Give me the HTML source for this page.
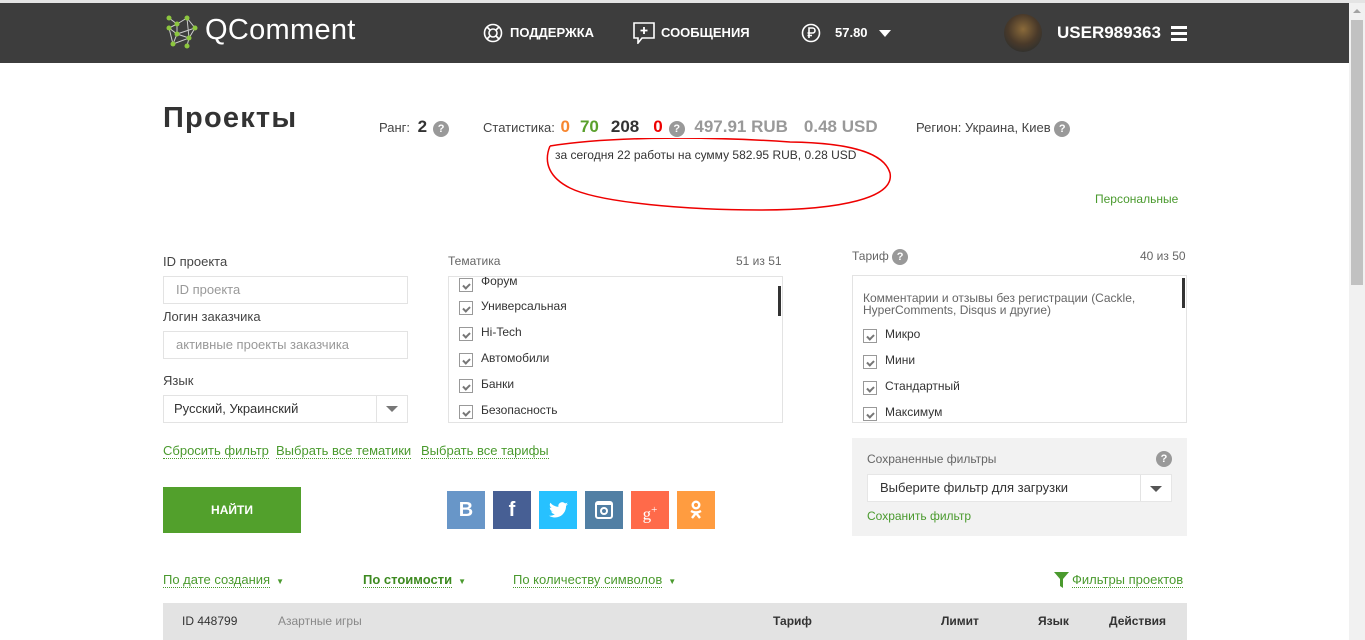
<!DOCTYPE html>
<html><head><meta charset="utf-8"><style>
*{margin:0;padding:0;box-sizing:border-box}
body{width:1365px;height:640px;overflow:hidden;background:#fff;font-family:"Liberation Sans",Arial,sans-serif;position:relative;color:#333}
.a{position:absolute;white-space:nowrap}
.hd{position:absolute;left:0;top:3px;width:1349px;height:60px;background:#3d3d3d}
.nav{color:#fff;font-weight:bold;font-size:13px}
.lbl{font-size:13px;color:#444}
.inp{position:absolute;border:1px solid #e3e3e3;background:#fff;font-size:13px;color:#999;padding-left:12px;line-height:25px}
.cb{position:absolute;width:14px;height:14px;border:1px solid #999;background:#fff}
.cb:after{content:"";position:absolute;left:3px;width:5px;height:3px;border-left:2px solid #777;border-bottom:2px solid #777;transform:rotate(-45deg);top:4px}
.it{position:absolute;font-size:12px;color:#333}
.lnk{color:#4a9a2e;font-size:13px;border-bottom:1px dotted #4a9a2e}
.q{display:inline-block;width:16px;height:16px;border-radius:50%;background:#999;color:#fff;font-size:11px;font-weight:bold;text-align:center;line-height:16px;vertical-align:middle}
.soc{position:absolute;top:491px;width:38px;height:38px;color:#fff;font-weight:bold;text-align:center;line-height:38px;font-size:20px}
</style></head><body>
<div class="a" style="left:0;top:0;width:1365px;height:3px;background:#e4e4e4"></div>
<div class="hd"></div>
<div class="a" style="left:1349px;top:3px;width:16px;height:637px;background:#f1f1f1"></div>
<div class="a" style="left:1351px;top:20px;width:12px;height:265px;background:#c1c1c1"></div>
<div class="a" style="left:1353px;top:9px;width:0;height:0;border-left:4px solid transparent;border-right:4px solid transparent;border-bottom:4px solid #a3a3a3"></div>
<svg class="a" style="left:163px;top:14px" width="36" height="36" viewBox="0 0 36 36"><g stroke="#ccc" stroke-width="1" fill="none"><path d="M6 4L14 10L24 4L32 14L26 24L14 20L6 14L14 10M14 10L14 20L10 30L26 24L24 32M6 14L10 30M24 4L26 24M32 14L14 20"/></g><g fill="#8dc63f"><circle cx="6" cy="4" r="2.5"/><circle cx="24" cy="4" r="2.5"/><circle cx="14" cy="10" r="2.5"/><circle cx="32" cy="14" r="2.5"/><circle cx="6" cy="14" r="2.5"/><circle cx="14" cy="20" r="2.5"/><circle cx="26" cy="24" r="2.5"/><circle cx="10" cy="30" r="2.5"/><circle cx="24" cy="32" r="2.5"/></g></svg>
<div class="a" style="left:205px;top:14px;color:#fff;font-size:29px;letter-spacing:0.3px">QComment</div>
<svg class="a" style="left:483px;top:23px" width="20" height="20" viewBox="0 0 20 20"><circle cx="10" cy="10" r="8.5" fill="none" stroke="#fff" stroke-width="1.6"/><circle cx="10" cy="10" r="4" fill="none" stroke="#fff" stroke-width="1.6"/><path d="M4 4L7 7M16 4L13 7M4 16L7 13M16 16L13 13" stroke="#fff" stroke-width="1.6"/></svg>
<div class="a nav" style="left:510px;top:25px">ПОДДЕРЖКА</div>
<svg class="a" style="left:633px;top:22px" width="22" height="22" viewBox="0 0 22 22"><path d="M1 1H21V16H9L5 21V16H1Z" fill="none" stroke="#fff" stroke-width="1.6"/><path d="M11 5V12M7.5 8.5H14.5" stroke="#fff" stroke-width="1.8"/></svg>
<div class="a nav" style="left:661px;top:25px">СООБЩЕНИЯ</div>
<svg class="a" style="left:801px;top:23px" width="20" height="20" viewBox="0 0 20 20"><circle cx="10" cy="10" r="8.5" fill="none" stroke="#fff" stroke-width="1.6"/><path d="M8 15V5H11.5A2.5 2.5 0 0 1 11.5 10H6.5M6.5 12.5H11" fill="none" stroke="#fff" stroke-width="1.6"/></svg>
<div class="a nav" style="left:835px;top:25px">57.80</div>
<div class="a" style="left:879px;top:30px;border-left:6px solid transparent;border-right:6px solid transparent;border-top:7px solid #fff"></div>
<div class="a" style="left:1004px;top:14px;width:38px;height:38px;border-radius:50%;background:radial-gradient(circle at 50% 40%,#8a6a3a,#4a3a2a 50%,#1e2a30)"></div>
<div class="a" style="left:1057px;top:23px;color:#fff;font-weight:bold;font-size:17px">USER989363</div>
<div class="a" style="left:1171px;top:26px;width:16px;height:3px;background:#fff;box-shadow:0 6px 0 #fff,0 12px 0 #fff"></div>
<div class="a" style="left:163px;top:102px;font-size:29px;font-weight:bold;color:#333;letter-spacing:1.2px">Проекты</div>
<div class="a" style="left:379px;top:117px;font-size:13px;color:#444">Ранг: <b style="font-size:17px;color:#333;margin:0 6px 0 4px">2</b><span class="q">?</span></div>
<div class="a" style="left:483px;top:117px;font-size:13px;color:#444">Статистика: <b style="font-size:17px;color:#f7862f;margin:0 10px 0 2px">0</b><b style="font-size:17px;color:#5aa02c;margin-right:12px">70</b><b style="font-size:17px;color:#333;margin-right:14px">208</b><b style="font-size:17px;color:#e00;margin-right:6px">0</b><span class="q">?</span> <b style="font-size:17px;color:#999;margin:0 16px 0 6px">497.91 RUB</b><b style="font-size:17px;color:#999">0.48 USD</b></div>
<div class="a" style="left:916px;top:120px;font-size:13px;color:#444">Регион: Украина, Киев <span class="q">?</span></div>
<div class="a" style="left:555px;top:148px;font-size:12px;color:#333">за сегодня 22 работы на сумму 582.95 RUB, 0.28 USD</div>
<svg class="a" style="left:540px;top:138px" width="355" height="80" viewBox="0 0 355 80"><path d="M10 8C60 0 150 -3 250 4C320 5 345 18 350 35C355 60 300 72 220 72C150 72 60 65 30 50C10 40 3 25 10 8" fill="none" stroke="#e00" stroke-width="1.5"/></svg>
<div class="a" style="left:1095px;top:192px;font-size:12px;color:#4a9a2e">Персональные</div>
<div class="a lbl" style="left:163px;top:254px">ID проекта</div>
<div class="inp" style="left:163px;top:276px;width:245px;height:28px">ID проекта</div>
<div class="a lbl" style="left:163px;top:309px">Логин заказчика</div>
<div class="inp" style="left:163px;top:331px;width:245px;height:28px">активные проекты заказчика</div>
<div class="a lbl" style="left:163px;top:373px">Язык</div>
<div class="inp" style="left:163px;top:395px;width:245px;height:28px;color:#333;padding-left:10px">Русский, Украинский</div>
<div class="a" style="left:376px;top:396px;width:1px;height:26px;background:#e3e3e3"></div>
<div class="a" style="left:386px;top:406px;border-left:6px solid transparent;border-right:6px solid transparent;border-top:6px solid #777"></div>
<div class="a" style="left:163px;top:442px"><span class="lnk">Сбросить фильтр</span></div>
<div class="a" style="left:276px;top:442px"><span class="lnk">Выбрать все тематики</span></div>
<div class="a" style="left:421px;top:442px"><span class="lnk">Выбрать все тарифы</span></div>
<div class="a" style="left:163px;top:487px;width:138px;height:46px;background:#52a02c;color:#fff;font-weight:bold;font-size:12px;text-align:center;line-height:46px">НАЙТИ</div>
<div class="a" style="left:448px;top:254px;font-size:12px;color:#666">Тематика</div>
<div class="a" style="left:736px;top:254px;font-size:12px;color:#666">51 из 51</div>
<div class="a" style="left:448px;top:276px;width:335px;height:147px;border:1px solid #e3e3e3;overflow:hidden">
<div class="a" style="left:329px;top:9px;width:3px;height:30px;background:#333"></div>
<div class="cb" style="left:10px;top:1px"></div><div class="it" style="left:32px;top:-3px">Форум</div>
<div class="cb" style="left:10px;top:24px"></div><div class="it" style="left:32px;top:22px">Универсальная</div>
<div class="cb" style="left:10px;top:50px"></div><div class="it" style="left:32px;top:48px">Hi-Tech</div>
<div class="cb" style="left:10px;top:76px"></div><div class="it" style="left:32px;top:74px">Автомобили</div>
<div class="cb" style="left:10px;top:102px"></div><div class="it" style="left:32px;top:100px">Банки</div>
<div class="cb" style="left:10px;top:128px"></div><div class="it" style="left:32px;top:126px">Безопасность</div>
</div>
<div class="soc" style="left:447px;background:#6896c8">B</div>
<div class="soc" style="left:493px;background:#475f94">f</div>
<div class="soc" style="left:539px;background:#27c1ff"><svg style="position:absolute;left:10px;top:11px" width="19" height="16" viewBox="0 0 24 20"><path d="M24 2.4c-.9.4-1.8.7-2.8.8 1-.6 1.8-1.6 2.2-2.7-1 .6-2 1-3.1 1.2A4.9 4.9 0 0 0 11.9 6 14 14 0 0 1 1.7.9a4.9 4.9 0 0 0 1.5 6.6c-.8 0-1.6-.2-2.2-.6 0 2.4 1.7 4.4 3.9 4.8-.7.2-1.5.2-2.2.1.6 2 2.4 3.4 4.6 3.4A9.9 9.9 0 0 1 0 17.2 14 14 0 0 0 7.5 19.4c9.1 0 14-7.5 14-14v-.6c1-.7 1.8-1.6 2.5-2.4z" fill="#fff"/></svg></div>
<div class="soc" style="left:585px;background:#517fa4"><div style="position:absolute;left:10px;top:10px;width:18px;height:18px;border:2px solid #fff;border-radius:3px;border-top-width:4px"></div><div style="position:absolute;left:15px;top:16px;width:8px;height:8px;border:2px solid #fff;border-radius:50%"></div></div>
<div class="soc" style="left:631px;background:#ff6a4a;font-weight:normal;font-family:'Liberation Serif',serif;font-size:17px">g<sup style="font-size:11px">+</sup></div>
<div class="soc" style="left:677px;background:#ff9c40"><svg style="position:absolute;left:12px;top:9px" width="14" height="20" viewBox="0 0 14 20"><circle cx="7" cy="5" r="3.3" fill="none" stroke="#fff" stroke-width="2.4"/><path d="M2 11Q7 14 12 11M7 13L3 18M7 13L11 18" fill="none" stroke="#fff" stroke-width="2.4"/></svg></div>
<div class="a" style="left:852px;top:249px;font-size:12px;color:#666">Тариф <span class="q">?</span></div>
<div class="a" style="left:1140px;top:249px;font-size:12px;color:#666">40 из 50</div>
<div class="a" style="left:852px;top:275px;width:335px;height:148px;border:1px solid #e3e3e3;overflow:hidden">
<div class="a" style="left:329px;top:2px;width:3px;height:30px;background:#333"></div>
<div class="a" style="left:10px;top:16px;font-size:12px;color:#666;line-height:12px;white-space:normal;width:300px">Комментарии и отзывы без регистрации (Cackle, HyperComments, Disqus и другие)</div>
<div class="cb" style="left:10px;top:53px"></div><div class="it" style="left:32px;top:51px">Микро</div>
<div class="cb" style="left:10px;top:79px"></div><div class="it" style="left:32px;top:77px">Мини</div>
<div class="cb" style="left:10px;top:105px"></div><div class="it" style="left:32px;top:103px">Стандартный</div>
<div class="cb" style="left:10px;top:131px"></div><div class="it" style="left:32px;top:129px">Максимум</div>
</div>
<div class="a" style="left:852px;top:438px;width:335px;height:98px;background:#f2f2f2"></div>
<div class="a" style="left:867px;top:452px;font-size:12px;color:#666">Сохраненные фильтры</div>
<div class="a q" style="left:1156px;top:451px">?</div>
<div class="inp" style="left:867px;top:474px;width:305px;height:28px;color:#333;border-color:#e6e6e6">Выберите фильтр для загрузки</div>
<div class="a" style="left:1140px;top:475px;width:1px;height:26px;background:#e3e3e3"></div>
<div class="a" style="left:1150px;top:486px;border-left:6px solid transparent;border-right:6px solid transparent;border-top:6px solid #555"></div>
<div class="a" style="left:867px;top:509px;font-size:12px;color:#4a9a2e">Сохранить фильтр</div>
<div class="a" style="left:163px;top:571px"><span class="lnk">По дате создания</span><span style="color:#4a9a2e;font-size:8px;margin-left:6px">▼</span></div>
<div class="a" style="left:363px;top:571px"><span class="lnk" style="font-weight:bold;color:#3d8a20">По стоимости</span><span style="color:#4a9a2e;font-size:8px;margin-left:6px">▼</span></div>
<div class="a" style="left:513px;top:571px"><span class="lnk">По количеству символов</span><span style="color:#4a9a2e;font-size:8px;margin-left:6px">▼</span></div>
<svg class="a" style="left:1054px;top:572px" width="15" height="16" viewBox="0 0 15 16"><path d="M0 0H15L9 7V16L6 14V7Z" fill="#4a9a2e"/></svg>
<div class="a" style="left:1072px;top:571px"><span class="lnk">Фильтры проектов</span></div>
<div class="a" style="left:163px;top:603px;width:1024px;height:37px;background:#e3e3e3"></div>
<div class="a" style="left:182px;top:614px;font-size:12px;color:#333">ID 448799</div>
<div class="a" style="left:278px;top:614px;font-size:12px;color:#888">Азартные игры</div>
<div class="a" style="left:773px;top:614px;font-size:12px;color:#333;font-weight:bold">Тариф</div>
<div class="a" style="left:941px;top:614px;font-size:12px;color:#333;font-weight:bold">Лимит</div>
<div class="a" style="left:1038px;top:614px;font-size:12px;color:#333;font-weight:bold">Язык</div>
<div class="a" style="left:1109px;top:614px;font-size:12px;color:#333;font-weight:bold">Действия</div>
</body></html>
